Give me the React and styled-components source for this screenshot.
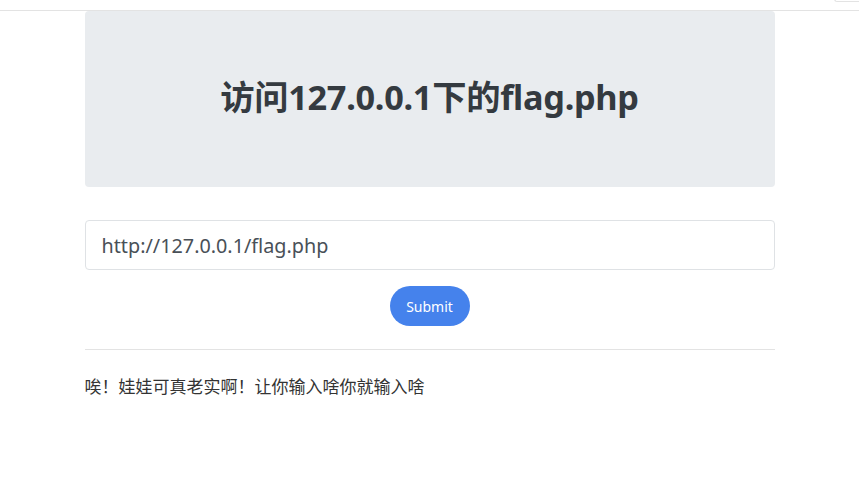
import React from "react";
import styled, { createGlobalStyle } from "styled-components";

const Global = createGlobalStyle`
  html, body { margin: 0; padding: 0; background: #fff; }
  body { font-family: "Noto Sans", "Noto Sans CJK SC", sans-serif; color: #333; }
`;

const TopBar = styled.div`
  height: 10px;
  border-bottom: 1px solid #e3e3e3;
  position: relative;
`;

const CornerTab = styled.div`
  position: absolute;
  right: 0;
  top: -6px;
  width: 24px;
  height: 7px;
  border-left: 1px solid #e3e3e3;
  border-bottom: 1px solid #e3e3e3;
  border-bottom-left-radius: 3px;
`;

const Container = styled.div`
  width: 690px;
  margin: 0 auto;
`;

const Jumbotron = styled.div`
  box-sizing: border-box;
  height: 176px;
  padding-bottom: 5px;
  background: #e9ecef;
  border-radius: 4px;
  display: flex;
  align-items: center;
  justify-content: center;
`;

const Title = styled.h1`
  margin: 0;
  font-family: "Noto Sans", "Noto Sans CJK SC", sans-serif;
  font-weight: 700;
  font-size: 34.3px;
  line-height: 1.2;
  color: #343a40;
  letter-spacing: -0.3px;
`;

const Form = styled.form`
  margin-top: 33px;
  display: flex;
  flex-direction: column;
  align-items: center;
  gap: 16px;
`;

const Input = styled.input`
  box-sizing: border-box;
  width: 100%;
  height: 50px;
  padding: 0 16px;
  border: 1px solid #dfe2e5;
  border-radius: 4px;
  font-family: "Noto Sans", "Noto Sans CJK SC", sans-serif;
  font-size: 19.8px;
  color: #495057;
  outline: none;
`;

const Button = styled.button`
  width: 80px;
  height: 40px;
  border: none;
  border-radius: 20px;
  background: #4582ec;
  color: #fff;
  font-family: "Noto Sans", "Noto Sans CJK SC", sans-serif;
  font-size: 14px;
  cursor: pointer;
`;

const Rule = styled.hr`
  margin: 23px 0 0;
  border: 0;
  border-top: 1px solid #e3e3e3;
`;

const Message = styled.p`
  margin: 25px 0 0;
  font-size: 17px;
  color: #333;
  line-height: 22px;
  font-family: "Noto Sans CJK SC", sans-serif;
`;

export default function App() {
  return (
    <>
      <Global />
      <TopBar>
        <CornerTab />
      </TopBar>
      <Container>
        <Jumbotron>
          <Title>访问127.0.0.1下的flag.php</Title>
        </Jumbotron>
        <Form onSubmit={(e) => e.preventDefault()}>
          <Input defaultValue="http://127.0.0.1/flag.php" />
          <Button type="submit">Submit</Button>
        </Form>
        <Rule />
        <Message>唉！娃娃可真老实啊！让你输入啥你就输入啥</Message>
      </Container>
    </>
  );
}
